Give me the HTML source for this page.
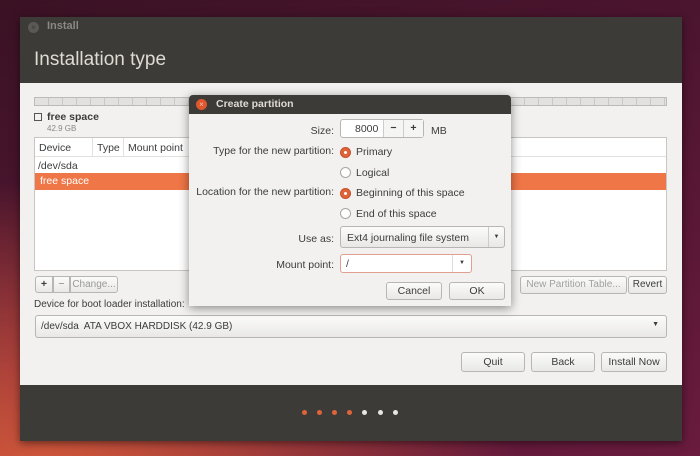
<!DOCTYPE html>
<html><head><meta charset="utf-8"><style>
*{margin:0;padding:0;box-sizing:border-box}
body{width:700px;height:456px;overflow:hidden;position:relative;font-family:"Liberation Sans",sans-serif;font-size:10.5px;color:#3c3c3c;
background:radial-gradient(ellipse 480px 300px at 40px 480px,#d45a3a 0%,#b0443a 35%,rgba(120,30,50,0) 100%),linear-gradient(160deg,#3a1224 0%,#4d1530 40%,#6a1b3e 100%);}
.a{position:absolute}
.win{left:20px;top:17px;width:662px;height:424px;background:#f2f1f0;box-shadow:0 2px 8px rgba(0,0,0,.5)}
.hdr{left:0;top:0;width:662px;height:66px;background:#3c3b37}
.btn{position:absolute;border:1px solid #b8b6b2;border-radius:3px;background:linear-gradient(#fbfbfa,#e9e8e6);text-align:center;color:#3c3c3c;font-size:10.5px}
.radio{position:absolute;width:11px;height:11px;border-radius:50%;border:1px solid #a8a6a2;background:#fff}
.radio.on{background:#e0643a;border-color:#c4512a}
.radio.on:after{content:"";position:absolute;left:3px;top:3px;width:3px;height:3px;border-radius:50%;background:#fff}
.lbl{position:absolute;text-align:right;width:145px}
.dot{position:absolute;top:410px;width:5px;height:5px;border-radius:50%}
</style></head><body>
<div class="a win">
 <div class="a hdr">
  <div class="a" style="left:8px;top:5px;width:11px;height:11px;border-radius:50%;background:#5a5955;color:#3c3b37;font-size:8px;line-height:11px;text-align:center">×</div>
  <div class="a" style="left:27px;top:3px;color:#8a8983;font-size:11px;font-weight:bold">Install</div>
  <div class="a" style="left:14px;top:32px;color:#dfdbd2;font-size:19px">Installation type</div>
 </div>
</div>
<div class="a" style="left:34px;top:97px;width:633px;height:9px;border:1px solid #bdbbb8;background:repeating-linear-gradient(90deg,#e2e1df 0 13px,#c9c8c5 13px 14px)"></div>
<div class="a" style="left:34px;top:113px;width:8px;height:8px;border:1px solid #555"></div>
<div class="a" style="left:47px;top:111px;font-weight:bold;font-size:10.5px">free space</div>
<div class="a" style="left:47px;top:124px;font-size:8px;color:#888">42.9 GB</div>
<div class="a" style="left:34px;top:137px;width:633px;height:134px;background:#fff;border:1px solid #c8c6c3">
 <div class="a" style="left:0;top:0;width:631px;height:19px;border-bottom:1px solid #e2e1df"></div>
 <div class="a" style="left:4px;top:4px">Device</div>
 <div class="a" style="left:57px;top:0;height:19px;border-left:1px solid #e2e1df;padding:4px 0 0 4px">Type</div>
 <div class="a" style="left:88px;top:0;height:19px;border-left:1px solid #e2e1df;padding:4px 0 0 4px">Mount point</div>
 <div class="a" style="left:3px;top:22px">/dev/sda</div>
 <div class="a" style="left:0;top:35px;width:631px;height:17px;background:#ef7646;color:#fff;padding:2px 0 0 5px">free space</div>
</div>
<div class="btn" style="left:35px;top:276px;width:18px;height:17px;font-weight:bold;line-height:15px;border-radius:3px 0 0 3px">+</div>
<div class="btn" style="left:53px;top:276px;width:17px;height:17px;line-height:15px;color:#888;border-radius:0">−</div>
<div class="btn" style="left:70px;top:276px;width:48px;height:17px;line-height:15px;color:#999;border-radius:0 3px 3px 0;font-size:10px">Change...</div>
<div class="btn" style="left:520px;top:276px;width:107px;height:18px;line-height:16px;color:#a0a0a0;font-size:10px">New Partition Table...</div>
<div class="btn" style="left:628px;top:276px;width:39px;height:18px;line-height:16px;font-size:10px">Revert</div>
<div class="a" style="left:34px;top:299px;font-size:10px">Device for boot loader installation:</div>
<div class="btn" style="left:35px;top:315px;width:632px;height:23px;text-align:left;padding:5px 0 0 5px;font-size:10px">/dev/sda&nbsp; ATA VBOX HARDDISK (42.9 GB)<span style="position:absolute;right:7px;top:5px;font-size:7px">▼</span></div>
<div class="btn" style="left:461px;top:352px;width:64px;height:20px;line-height:18px">Quit</div>
<div class="btn" style="left:531px;top:352px;width:64px;height:20px;line-height:18px">Back</div>
<div class="btn" style="left:601px;top:352px;width:66px;height:20px;line-height:18px">Install Now</div>
<div class="a" style="left:20px;top:385px;width:662px;height:56px;background:#3c3b37"></div>
<div class="dot" style="left:302px;background:#e0643a"></div>
<div class="dot" style="left:317px;background:#e0643a"></div>
<div class="dot" style="left:332px;background:#e0643a"></div>
<div class="dot" style="left:347px;background:#e0643a"></div>
<div class="dot" style="left:362px;background:#e8e6e3"></div>
<div class="dot" style="left:378px;background:#e8e6e3"></div>
<div class="dot" style="left:393px;background:#e8e6e3"></div>

<div class="a" style="left:189px;top:95px;width:322px;height:211px;background:#f2f1f0;border-radius:4px 4px 0 0;box-shadow:0 2px 10px rgba(0,0,0,.45)">
 <div class="a" style="left:0;top:0;width:322px;height:19px;background:#3c3b37;border-radius:4px 4px 0 0"></div>
 <div class="a" style="left:7px;top:4px;width:11px;height:11px;border-radius:50%;background:#e0572d;color:#f5c4b4;font-size:8px;line-height:11px;text-align:center">×</div>
 <div class="a" style="left:27px;top:3px;color:#dfdbd2;font-weight:bold;font-size:10.5px">Create partition</div>
 <div class="lbl" style="left:0;top:30px">Size:</div>
 <div class="a" style="left:151px;top:24px;width:84px;height:19px;border:1px solid #b8b6b2;border-radius:3px;background:#fff">
  <div class="a" style="left:14px;top:3px">8000</div>
  <div class="a" style="left:42px;top:0;width:20px;height:17px;border-left:1px solid #ccc;text-align:center;line-height:16px;font-weight:bold;background:#f5f5f4">−</div>
  <div class="a" style="left:62px;top:0;width:20px;height:17px;border-left:1px solid #ccc;text-align:center;line-height:16px;font-weight:bold;background:#f5f5f4">+</div>
 </div>
 <div class="a" style="left:242px;top:30px">MB</div>
 <div class="lbl" style="left:0;top:50px">Type for the new partition:</div>
 <div class="radio on" style="left:151px;top:52px"></div><div class="a" style="left:167px;top:51px">Primary</div>
 <div class="radio" style="left:151px;top:72px"></div><div class="a" style="left:167px;top:72px">Logical</div>
 <div class="lbl" style="left:0;top:91px">Location for the new partition:</div>
 <div class="radio on" style="left:151px;top:93px"></div><div class="a" style="left:167px;top:92px">Beginning of this space</div>
 <div class="radio" style="left:151px;top:113px"></div><div class="a" style="left:167px;top:113px">End of this space</div>
 <div class="lbl" style="left:0;top:138px">Use as:</div>
 <div class="btn" style="left:151px;top:131px;width:165px;height:22px;text-align:left;padding:5px 0 0 6px">Ext4 journaling file system<span style="position:absolute;right:0;top:0;width:16px;height:20px;border-left:1px solid #ccc;font-size:6px;line-height:20px;text-align:center">▼</span></div>
 <div class="lbl" style="left:0;top:164px">Mount point:</div>
 <div class="a" style="left:151px;top:159px;width:132px;height:19px;border:1px solid #e0a090;border-radius:3px;background:#fff;padding:3px 0 0 5px">/<span style="position:absolute;right:0;top:0;width:19px;height:17px;border-left:1px solid #ddd;font-size:6px;line-height:17px;text-align:center">▼</span></div>
 <div class="btn" style="left:197px;top:187px;width:56px;height:18px;line-height:16px">Cancel</div>
 <div class="btn" style="left:260px;top:187px;width:56px;height:18px;line-height:16px">OK</div>
</div>
</body></html>
